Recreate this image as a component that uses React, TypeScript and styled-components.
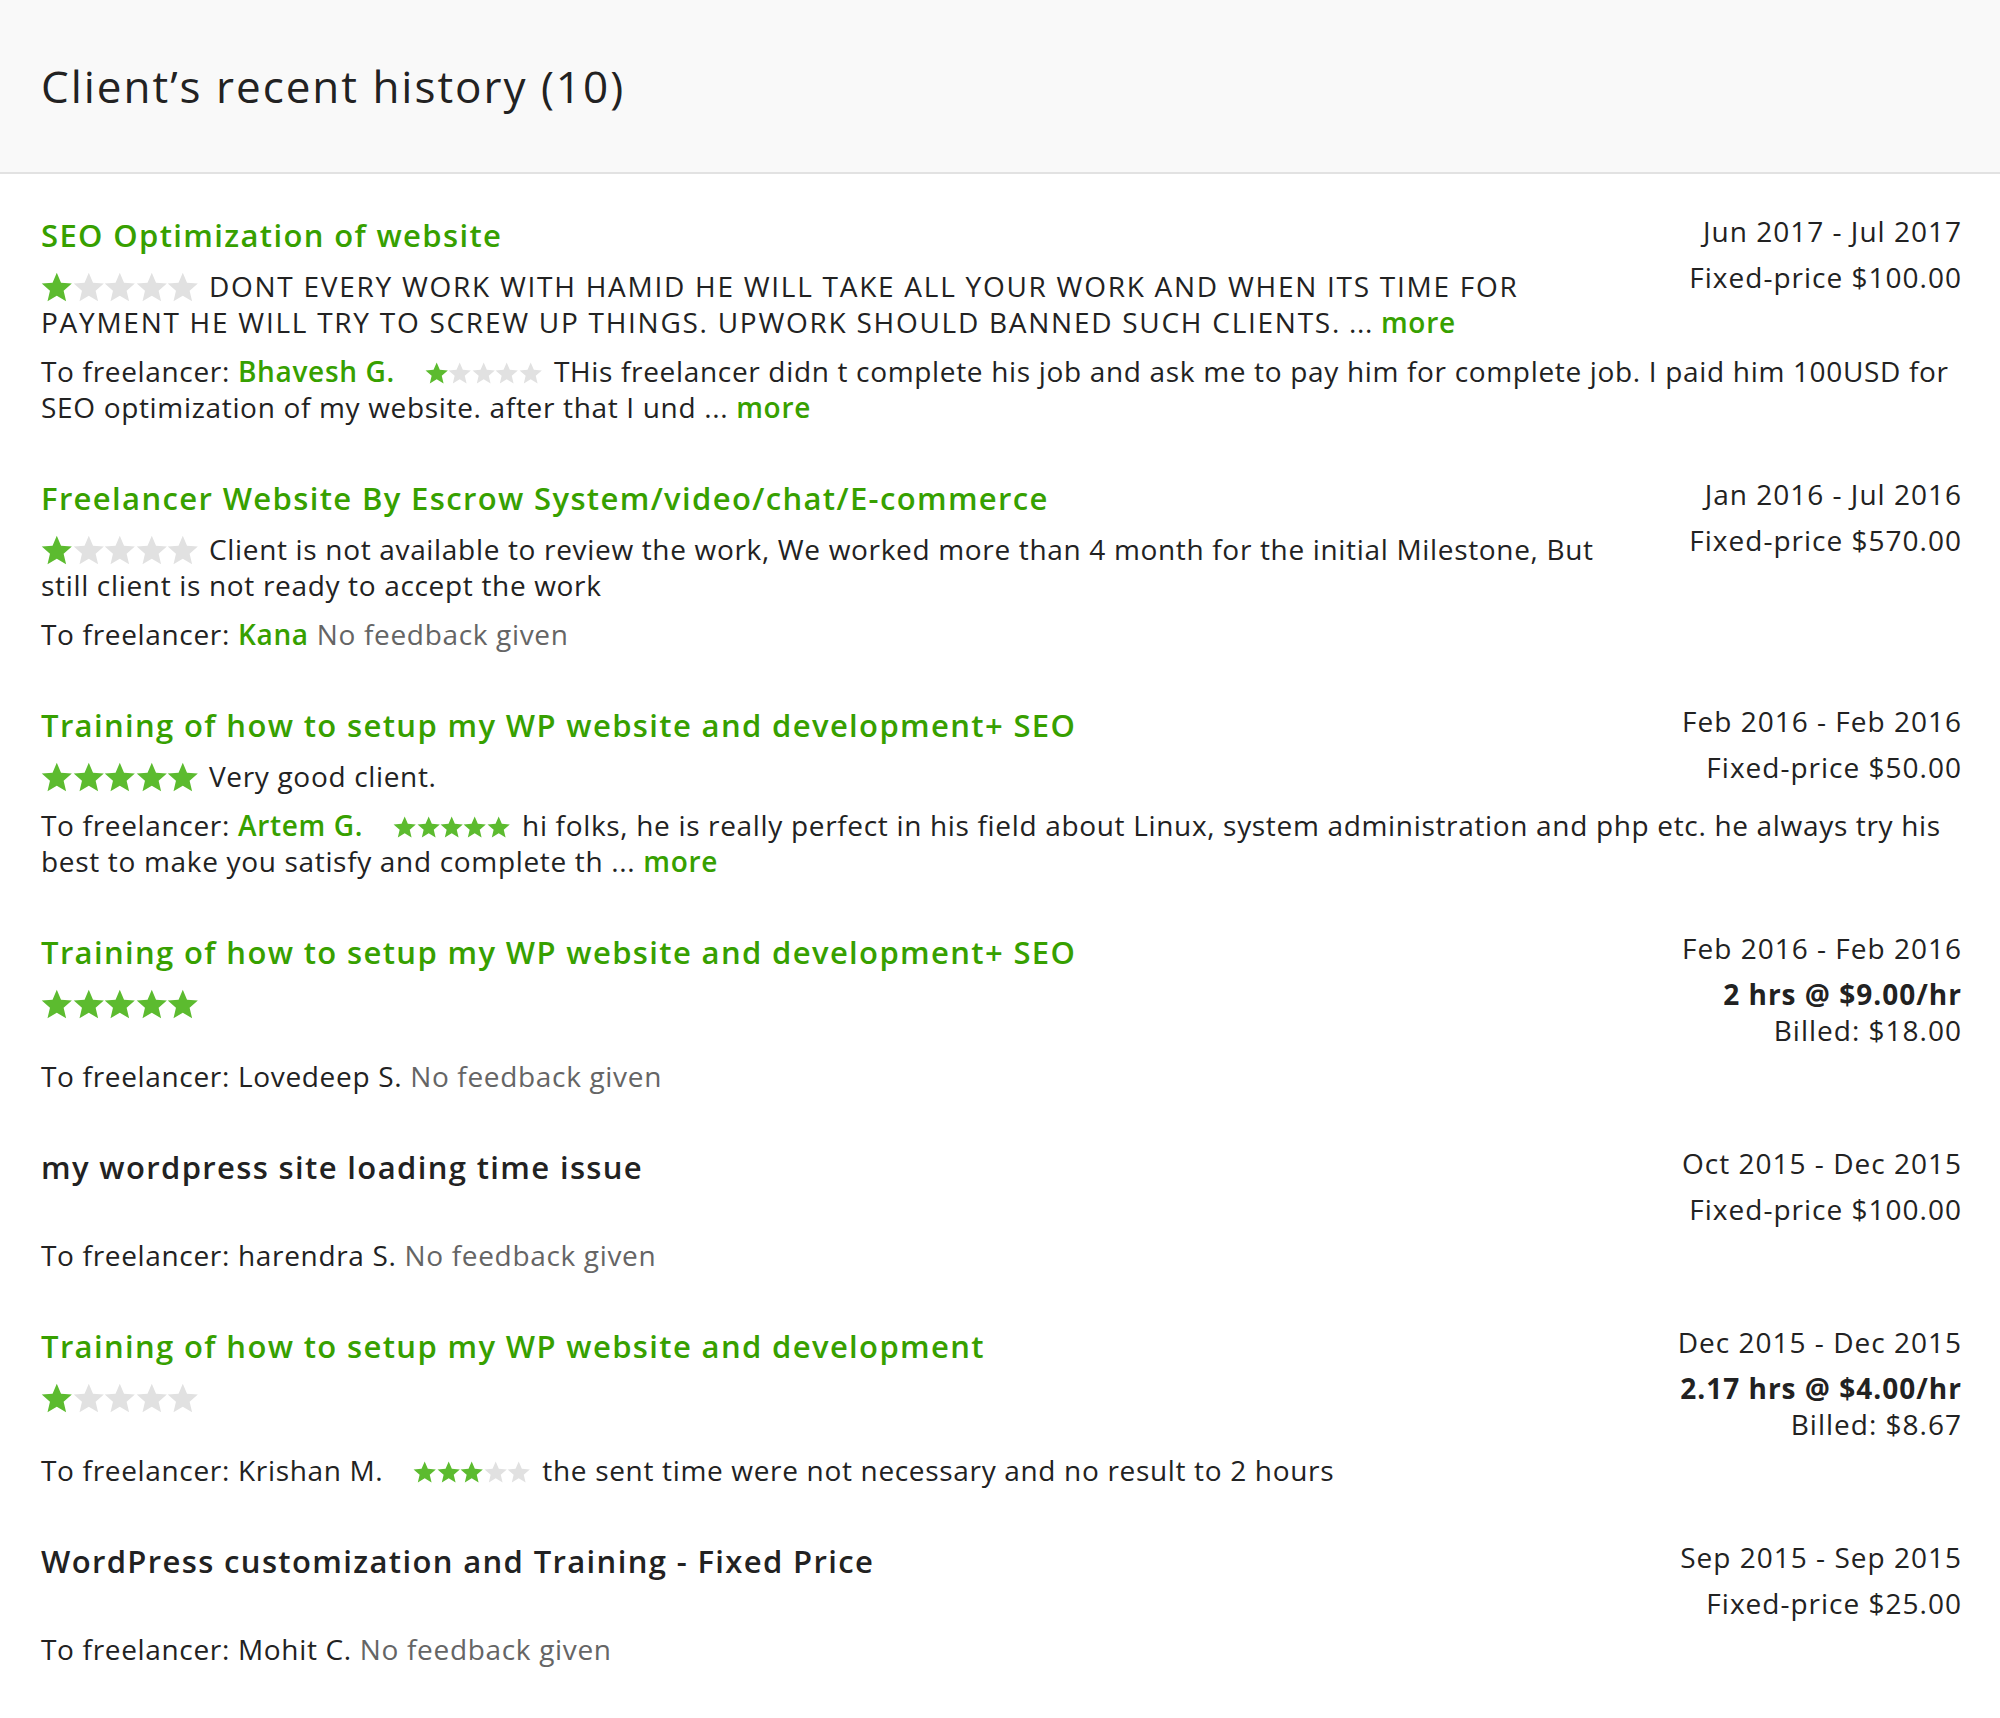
import React from 'react'
import styled, { createGlobalStyle } from 'styled-components'

const GlobalStyle = createGlobalStyle`
  body {
    margin: 0;
    background: #fff;
    color: #222;
    font-family: 'Open Sans', 'DejaVu Sans', sans-serif;
    letter-spacing: 0.042em;
  }
`

const Page = styled.div`
  width: 2000px;
`

const Header = styled.header`
  height: 172px;
  display: flex;
  align-items: center;
  padding: 0 41px;
  background: #f9f9f9;
  border-bottom: 2px solid #e2e2e2;
`

const Heading = styled.h2`
  margin: 0;
  font-size: 44px;
  font-weight: 400;
  line-height: 1;
  letter-spacing: 0.045em;
  color: #222;
`

const List = styled.section`
  padding: 39px 38px 0 41px;
`

const Item = styled.article`
  margin-bottom: 51px;
`

const Top = styled.div`
  display: flex;
  align-items: flex-start;
`

const Main = styled.div`
  flex: 0 0 1585px;
`

const Side = styled.div`
  flex: 1;
  text-align: right;
  white-space: nowrap;
  font-size: 28px;
  line-height: 36px;
  letter-spacing: 0.036em;
`

const JobTitle = styled.h3<{ $link?: boolean }>`
  margin: 0;
  font-size: 31px;
  line-height: 44px;
  font-weight: 600;
  letter-spacing: 0.044em;
  color: ${(p) => (p.$link ? '#37a000' : '#222')};
`

const Feedback = styled.p`
  margin: 11px 0 3px;
  font-size: 28px;
  line-height: 36px;
`

const Review = styled.span<{ $loud?: boolean }>`
  letter-spacing: ${(p) => (p.$loud ? '0.062em' : 'inherit')};
`

const Freelancer = styled.p`
  margin: 10px 0 0;
  font-size: 28px;
  line-height: 36px;
`

const Link = styled.a`
  color: #37a000;
  font-weight: 600;
  text-decoration: none;
`

const Muted = styled.span`
  color: #656565;
`

const Terms = styled.div`
  margin-top: 10px;
`

const Strong = styled.div`
  font-weight: 700;
`

const StarRow = styled.span<{ $size: 'lg' | 'sm'; $gap: number }>`
  display: inline-flex;
  vertical-align: ${(p) => (p.$size === 'lg' ? '-5px' : '-2px')};
  margin-left: ${(p) => p.$gap}px;
  margin-right: ${(p) => (p.$size === 'lg' ? 10 : 12)}px;

  svg {
    width: ${(p) => (p.$size === 'lg' ? 31.6 : 23.4)}px;
    height: ${(p) => (p.$size === 'lg' ? 30 : 22)}px;
    display: block;
    filter: blur(0.45px);
  }
`

const STAR = 'M12 17.27L18.18 21l-1.64-7.03L22 9.24l-7.19-.61L12 2 9.19 8.63 2 9.24l5.46 4.73L5.82 21z'

const Stars = ({ rating, size, gap = 0 }: { rating: number; size: 'lg' | 'sm'; gap?: number }) => (
  <StarRow $size={size} $gap={gap}>
    {[1, 2, 3, 4, 5].map((n) => (
      <svg key={n} viewBox="1.5 1.5 21 20" preserveAspectRatio="none">
        <path d={STAR} fill={n <= rating ? '#5cbb2f' : '#e1e1e1'} />
      </svg>
    ))}
  </StarRow>
)

type Job = {
  title: string
  titleLink: boolean
  rating?: number
  review?: string
  loud?: boolean
  reviewMore?: boolean
  dates: string
  fixed?: string
  hourly?: [string, string]
  freelancer: string
  freelancerLink: boolean
  given?: number
  givenText?: string
  givenMore?: boolean
}

const jobs: Job[] = [
  {
    title: 'SEO Optimization of website',
    titleLink: true,
    rating: 1,
    review:
      'DONT EVERY WORK WITH HAMID HE WILL TAKE ALL YOUR WORK AND WHEN ITS TIME FOR PAYMENT HE WILL TRY TO SCREW UP THINGS. UPWORK SHOULD BANNED SUCH CLIENTS.',
    loud: true,
    reviewMore: true,
    dates: 'Jun 2017 - Jul 2017',
    fixed: '$100.00',
    freelancer: 'Bhavesh G.',
    freelancerLink: true,
    given: 1,
    givenText:
      'THis freelancer didn t complete his job and ask me to pay him for complete job. I paid him 100USD for SEO optimization of my website. after that I und',
    givenMore: true,
  },
  {
    title: 'Freelancer Website By Escrow System/video/chat/E-commerce',
    titleLink: true,
    rating: 1,
    review:
      'Client is not available to review the work, We worked more than 4 month for the initial Milestone, But still client is not ready to accept the work',
    dates: 'Jan 2016 - Jul 2016',
    fixed: '$570.00',
    freelancer: 'Kana',
    freelancerLink: true,
  },
  {
    title: 'Training of how to setup my WP website and development+ SEO',
    titleLink: true,
    rating: 5,
    review: 'Very good client.',
    dates: 'Feb 2016 - Feb 2016',
    fixed: '$50.00',
    freelancer: 'Artem G.',
    freelancerLink: true,
    given: 5,
    givenText:
      'hi folks, he is really perfect in his field about Linux, system administration and php etc. he always try his best to make you satisfy and complete th',
    givenMore: true,
  },
  {
    title: 'Training of how to setup my WP website and development+ SEO',
    titleLink: true,
    rating: 5,
    dates: 'Feb 2016 - Feb 2016',
    hourly: ['2 hrs @ $9.00/hr', 'Billed: $18.00'],
    freelancer: 'Lovedeep S.',
    freelancerLink: false,
  },
  {
    title: 'my wordpress site loading time issue',
    titleLink: false,
    dates: 'Oct 2015 - Dec 2015',
    fixed: '$100.00',
    freelancer: 'harendra S.',
    freelancerLink: false,
  },
  {
    title: 'Training of how to setup my WP website and development',
    titleLink: true,
    rating: 1,
    dates: 'Dec 2015 - Dec 2015',
    hourly: ['2.17 hrs @ $4.00/hr', 'Billed: $8.67'],
    freelancer: 'Krishan M.',
    freelancerLink: false,
    given: 3,
    givenText: 'the sent time were not necessary and no result to 2 hours',
  },
  {
    title: 'WordPress customization and Training - Fixed Price',
    titleLink: false,
    dates: 'Sep 2015 - Sep 2015',
    fixed: '$25.00',
    freelancer: 'Mohit C.',
    freelancerLink: false,
  },
]

const HistoryItem = ({ job }: { job: Job }) => (
  <Item>
    <Top>
      <Main>
        <JobTitle $link={job.titleLink}>{job.title}</JobTitle>
        {job.rating !== undefined && (
          <Feedback>
            <Stars rating={job.rating} size="lg" />
            {job.review && <Review $loud={job.loud}>{job.review}</Review>}
            {job.reviewMore && (
              <>
                {' ... '}
                <Link href="#">more</Link>
              </>
            )}
          </Feedback>
        )}
      </Main>
      <Side>
        <div>{job.dates}</div>
        <Terms>
          {job.fixed && <div>Fixed-price {job.fixed}</div>}
          {job.hourly && (
            <>
              <Strong>{job.hourly[0]}</Strong>
              <div>{job.hourly[1]}</div>
            </>
          )}
        </Terms>
      </Side>
    </Top>
    <Freelancer>
      To freelancer:{' '}
      {job.freelancerLink ? <Link href="#">{job.freelancer}</Link> : job.freelancer}
      {job.given !== undefined ? (
        <>
          <Stars rating={job.given} size="sm" gap={30} />
          {job.givenText}
          {job.givenMore && (
            <>
              {' ... '}
              <Link href="#">more</Link>
            </>
          )}
        </>
      ) : (
        <Muted> No feedback given</Muted>
      )}
    </Freelancer>
  </Item>
)

export default function App() {
  return (
    <Page>
      <GlobalStyle />
      <Header>
        <Heading>Client&rsquo;s recent history (10)</Heading>
      </Header>
      <List>
        {jobs.map((job, i) => (
          <HistoryItem key={i} job={job} />
        ))}
      </List>
    </Page>
  )
}
